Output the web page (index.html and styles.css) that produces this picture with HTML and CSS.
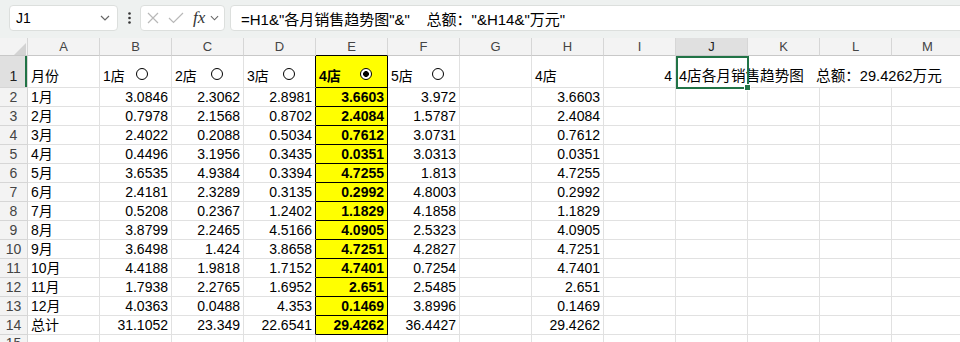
FILE: index.html
```html
<!DOCTYPE html>
<html lang="zh-CN">
<head>
<meta charset="UTF-8">
<title>各月销售趋势图</title>
<link rel="stylesheet" href="styles.css">
</head>
<body>
    <div class="toolbar">
        <div class="namebox">
            <span>J1</span>
            <svg class="chev" width="10" height="6" viewBox="0 0 10 6"><polyline points="1,1 5,5 9,1"/></svg>
        </div>
        <div class="grip">
            <svg width="3" height="12" viewBox="0 0 3 12"><circle cx="1.5" cy="1.5" r="1.3"/><circle cx="1.5" cy="6" r="1.3"/><circle cx="1.5" cy="10.5" r="1.3"/></svg>
        </div>
        <div class="fxbox">
            <svg class="cancel" width="12" height="12" viewBox="0 0 12 12"><path d="M1 1L11 11M11 1L1 11"/></svg>
            <svg class="enter" width="16" height="12" viewBox="0 0 16 12"><path d="M1 6L5.5 10.5L15 1"/></svg>
            <span class="fx">fx</span>
            <svg class="chev" width="9" height="6" viewBox="0 0 10 6"><polyline points="1,1 5,5 9,1"/></svg>
        </div>
        <div class="formula">=H1&amp;"各月销售趋势图"&amp;"    总额："&amp;H14&amp;"万元"</div>
    </div>

    <table class="sheet">
        <colgroup>
            <col class="rh">
            <col span="13" class="col">
        </colgroup>
        <tr class="cols">
            <th class="corner"><svg width="12" height="12" viewBox="0 0 12 12"><path d="M12 0V12H0Z"/></svg></th>
            <th>A</th><th>B</th><th>C</th><th>D</th><th class="ce">E</th><th>F</th><th>G</th>
            <th>H</th><th>I</th><th class="on">J</th><th>K</th><th>L</th><th>M</th>
        </tr>
        <tr class="head">
            <th class="on">1</th>
            <td>月份</td>
            <td>1店<span class="radio near"></span></td>
            <td>2店<span class="radio"></span></td>
            <td>3店<span class="radio"></span></td>
            <td class="hl">4店<span class="radio far checked"></span></td>
            <td>5店<span class="radio far"></span></td>
            <td></td>
            <td>4店</td>
            <td class="r">4</td>
            <td class="title" colspan="4">4店各月销售趋势图    总额：29.4262万元<div class="sel"><span class="handle"></span></div></td>
        </tr>
        <tr><th>2</th><td>1月</td><td>3.0846</td><td>2.3062</td><td>2.8981</td><td class="hl">3.6603</td><td>3.972</td><td></td><td>3.6603</td><td></td><td></td><td></td><td></td><td></td></tr>
        <tr><th>3</th><td>2月</td><td>0.7978</td><td>2.1568</td><td>0.8702</td><td class="hl">2.4084</td><td>1.5787</td><td></td><td>2.4084</td><td></td><td></td><td></td><td></td><td></td></tr>
        <tr><th>4</th><td>3月</td><td>2.4022</td><td>0.2088</td><td>0.5034</td><td class="hl">0.7612</td><td>3.0731</td><td></td><td>0.7612</td><td></td><td></td><td></td><td></td><td></td></tr>
        <tr><th>5</th><td>4月</td><td>0.4496</td><td>3.1956</td><td>0.3435</td><td class="hl">0.0351</td><td>3.0313</td><td></td><td>0.0351</td><td></td><td></td><td></td><td></td><td></td></tr>
        <tr><th>6</th><td>5月</td><td>3.6535</td><td>4.9384</td><td>0.3394</td><td class="hl">4.7255</td><td>1.813</td><td></td><td>4.7255</td><td></td><td></td><td></td><td></td><td></td></tr>
        <tr><th>7</th><td>6月</td><td>2.4181</td><td>2.3289</td><td>0.3135</td><td class="hl">0.2992</td><td>4.8003</td><td></td><td>0.2992</td><td></td><td></td><td></td><td></td><td></td></tr>
        <tr><th>8</th><td>7月</td><td>0.5208</td><td>0.2367</td><td>1.2402</td><td class="hl">1.1829</td><td>4.1858</td><td></td><td>1.1829</td><td></td><td></td><td></td><td></td><td></td></tr>
        <tr><th>9</th><td>8月</td><td>3.8799</td><td>2.2465</td><td>4.5166</td><td class="hl">4.0905</td><td>2.5323</td><td></td><td>4.0905</td><td></td><td></td><td></td><td></td><td></td></tr>
        <tr><th>10</th><td>9月</td><td>3.6498</td><td>1.424</td><td>3.8658</td><td class="hl">4.7251</td><td>4.2827</td><td></td><td>4.7251</td><td></td><td></td><td></td><td></td><td></td></tr>
        <tr><th>11</th><td>10月</td><td>4.4188</td><td>1.9818</td><td>1.7152</td><td class="hl">4.7401</td><td>0.7254</td><td></td><td>4.7401</td><td></td><td></td><td></td><td></td><td></td></tr>
        <tr><th>12</th><td>11月</td><td>1.7938</td><td>2.2765</td><td>1.6952</td><td class="hl">2.651</td><td>2.5485</td><td></td><td>2.651</td><td></td><td></td><td></td><td></td><td></td></tr>
        <tr><th>13</th><td>12月</td><td>4.0363</td><td>0.0488</td><td>4.353</td><td class="hl">0.1469</td><td>3.8996</td><td></td><td>0.1469</td><td></td><td></td><td></td><td></td><td></td></tr>
        <tr><th>14</th><td>总计</td><td>31.1052</td><td>23.349</td><td>22.6541</td><td class="hl">29.4262</td><td>36.4427</td><td></td><td>29.4262</td><td></td><td></td><td></td><td></td><td></td></tr>
        <tr class="last"><th>15</th><td></td><td></td><td></td><td></td><td></td><td></td><td></td><td></td><td></td><td></td><td></td><td></td><td></td></tr>
    </table>
</body>
</html>
```

FILE: styles.css
```css
/* Sheet window */
body {
    margin: 0;
    overflow: hidden;
    background-color: #fff;
    font-family: "Liberation Sans", "Noto Sans CJK SC", sans-serif;
    color: #000;
}

/* Formula bar */
.toolbar {
    display: flex;
    align-items: center;
    height: 38px;
    padding: 0 0 2px 9px;
    box-sizing: border-box;
    background-color: #eef1f0;
}

.namebox,
.fxbox,
.formula {
    height: 26px;
    box-sizing: border-box;
    background-color: #fff;
    border: 1px solid #dcdfdd;
    border-radius: 4px;
    display: flex;
    align-items: center;
}

.namebox {
    width: 109px;
    justify-content: space-between;
    padding: 0 7px 0 6px;
    font-size: 14px;
}

.chev {
    fill: none;
    stroke: #666;
    stroke-width: 1.2;
}

.grip {
    width: 22px;
    display: flex;
    justify-content: center;
}

.grip svg {
    fill: #333;
}

.fxbox {
    width: 85px;
    padding-left: 6px;
}

.cancel,
.enter {
    fill: none;
    stroke: #b8b8b8;
    stroke-width: 1.2;
}

.enter {
    margin-left: 9px;
}

.fx {
    margin-left: 9px;
    font-family: "Liberation Serif", serif;
    font-style: italic;
    font-size: 17px;
    color: #333;
}

.fxbox .chev {
    margin-left: 5px;
}

.formula {
    flex: 1;
    margin: 0 -10px 0 5px;
    padding-left: 10px;
    font-size: 15px;
    white-space: pre;
}

/* Grid */
.sheet {
    border-collapse: separate;
    border-spacing: 0;
    table-layout: fixed;
    width: 964px;
    font-size: 14px;
}

.rh {
    width: 28px;
}

.col {
    width: 72px;
}

.sheet th,
.sheet td {
    box-sizing: border-box;
    height: 19px;
    padding: 0 3px;
    line-height: 18px;
    white-space: nowrap;
    overflow: hidden;
}

.sheet td {
    text-align: right;
    border-right: 1px solid #e1e1e1;
    border-bottom: 1px solid #e1e1e1;
}

.sheet td:nth-child(2) {
    text-align: left;
}

.sheet th {
    padding: 0;
    font-weight: normal;
    color: #444;
    background-color: #f3f3f3;
    border-right: 1px solid #d6d6d6;
    border-bottom: 1px solid #d6d6d6;
}

.cols th {
    height: 18px;
    font-size: 13px;
    line-height: 17px;
    border-bottom-color: #c8c8c8;
}

.sheet th.on {
    background-color: #e0e0e0;
    color: #222;
}

.head th.on {
    box-shadow: inset -2px 0 #217346;
}

.last th {
    vertical-align: top;
    line-height: 16px;
}

.corner {
    text-align: right;
    vertical-align: bottom;
}

.corner svg {
    display: block;
    margin: 0 1px 0 auto;
    fill: #d3d3d3;
}

.cols .ce {
    border-bottom-color: #000;
}

.head td,
.head th {
    height: 32px;
    vertical-align: bottom;
    padding-bottom: 2px;
    text-align: left;
}

.head th {
    text-align: center;
}

.head td.r {
    text-align: right;
}

/* Highlighted store column */
.sheet td.hl {
    background-color: #ffff00;
    font-weight: bold;
    border-right-color: #000;
    border-bottom-color: #000;
}

.sheet td:has(+ .hl) {
    border-right-color: #000;
}

/* Option buttons */
.radio {
    display: inline-block;
    width: 12px;
    height: 12px;
    margin-left: 14px;
    border: 1px solid #000;
    border-radius: 50%;
    box-sizing: border-box;
    background-color: #fff;
    vertical-align: 1px;
}

.radio.near {
    margin-left: 11px;
}

.radio.far {
    margin-left: 19px;
}

.radio.checked {
    background: radial-gradient(circle, #000 2.6px, #fff 3.2px);
}

/* Active cell */
.sheet td.title {
    position: relative;
    overflow: visible;
    white-space: pre;
    text-align: left;
    font-size: 14.6px;
    word-spacing: -1px;
}

.sel {
    position: absolute;
    left: 0;
    top: 0;
    width: 73px;
    height: 33px;
    border: 2px solid #217346;
    box-sizing: border-box;
}

.handle {
    position: absolute;
    right: -4px;
    bottom: -4px;
    width: 5px;
    height: 5px;
    background-color: #217346;
    border: 1px solid #fff;
}
```
